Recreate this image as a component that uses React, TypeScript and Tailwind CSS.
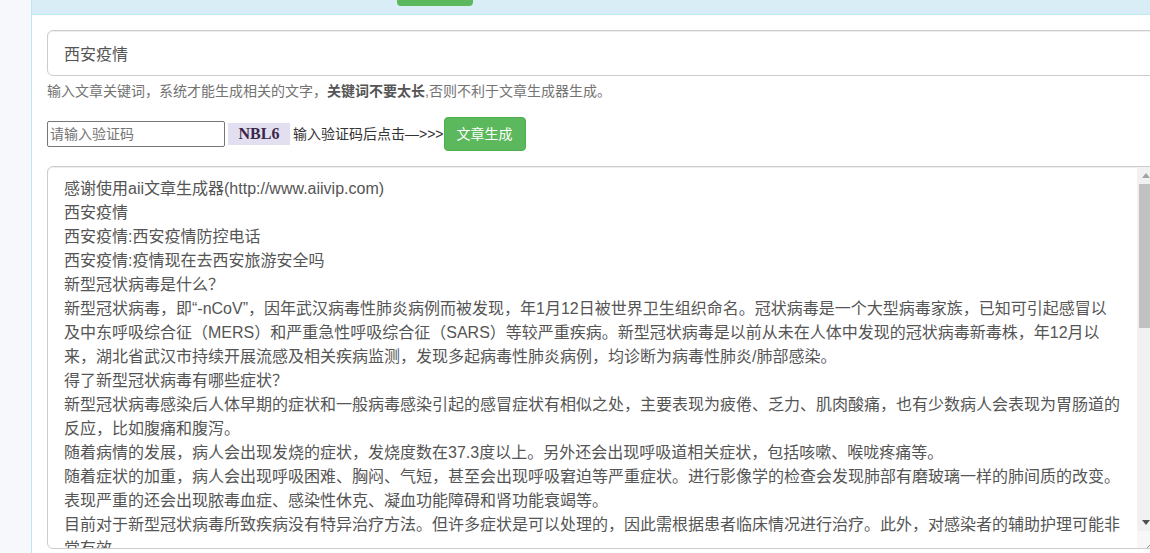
import React from "react";

const lines = [
  "感谢使用aii文章生成器(http://www.aiivip.com)",
  "西安疫情",
  "西安疫情:西安疫情防控电话",
  "西安疫情:疫情现在去西安旅游安全吗",
  "新型冠状病毒是什么？",
  "新型冠状病毒，即“-nCoV”，因年武汉病毒性肺炎病例而被发现，年1月12日被世界卫生组织命名。冠状病毒是一个大型病毒家族，已知可引起感冒以",
  "及中东呼吸综合征（MERS）和严重急性呼吸综合征（SARS）等较严重疾病。新型冠状病毒是以前从未在人体中发现的冠状病毒新毒株，年12月以",
  "来，湖北省武汉市持续开展流感及相关疾病监测，发现多起病毒性肺炎病例，均诊断为病毒性肺炎/肺部感染。",
  "得了新型冠状病毒有哪些症状？",
  "新型冠状病毒感染后人体早期的症状和一般病毒感染引起的感冒症状有相似之处，主要表现为疲倦、乏力、肌肉酸痛，也有少数病人会表现为胃肠道的",
  "反应，比如腹痛和腹泻。",
  "随着病情的发展，病人会出现发烧的症状，发烧度数在37.3度以上。另外还会出现呼吸道相关症状，包括咳嗽、喉咙疼痛等。",
  "随着症状的加重，病人会出现呼吸困难、胸闷、气短，甚至会出现呼吸窘迫等严重症状。进行影像学的检查会发现肺部有磨玻璃一样的肺间质的改变。",
  "表现严重的还会出现脓毒血症、感染性休克、凝血功能障碍和肾功能衰竭等。",
  "目前对于新型冠状病毒所致疾病没有特异治疗方法。但许多症状是可以处理的，因此需根据患者临床情况进行治疗。此外，对感染者的辅助护理可能非",
  "常有效。",
];

export default function App() {
  return (
    <div className="w-[1150px] h-[553px] overflow-hidden bg-[#f6f8fb] flex font-['Liberation_Sans','Noto_Sans_CJK_SC',sans-serif]">
      <div className="w-[31px] shrink-0" />
      <div className="w-[1139px] shrink-0 border-l border-[#bce8f1] bg-white flex flex-col">
        <div className="h-[15px] bg-[#d9edf7] border-b border-[#bce8f1] pl-[365px]">
          <div className="w-[76px] h-[6px] bg-[#5cb85c] rounded-b-[4px]" />
        </div>
        <div className="px-[15px] pt-[15px] flex flex-col">
          <input
            defaultValue="西安疫情"
            className="h-[46px] w-full border border-[#ccc] rounded-[6px] px-[16px] text-[16px] text-[#555] shadow-[inset_0_1px_1px_rgba(0,0,0,0.075)] outline-none"
          />
          <div className="mt-[5px] text-[14px] leading-[20px] text-[#737373] whitespace-nowrap">
            输入文章关键词，系统才能生成相关的文字，<b className="text-[#555]">关键词不要太长</b>,否则不利于文章生成器生成。
          </div>
          <div className="mt-[16px] h-[34px] flex items-center">
            <input
              placeholder="请输入验证码"
              className="w-[178px] h-[26px] border border-[#767676] rounded-[2px] px-[2px] text-[14px] text-[#333] placeholder:text-[#757575] outline-none"
            />
            <div className="ml-[3px] w-[62px] h-[22px] bg-[#e2e0f0] flex items-center justify-center font-['Liberation_Serif',serif] font-bold text-[16px] text-[#3b2648]">
              NBL6
            </div>
            <span className="ml-[3px] text-[14px] text-[#333] whitespace-nowrap">输入验证码后点击—&gt;&gt;&gt;</span>
            <button className="h-[34px] px-[12px] border border-[#4cae4c] bg-[#5cb85c] rounded-[4px] text-white text-[14px] leading-[20px]">
              文章生成
            </button>
          </div>
          <div className="mt-[15px] relative h-[383px] border border-[#ccc] rounded-[6px] overflow-hidden shadow-[inset_0_1px_1px_rgba(0,0,0,0.075)]">
            <div className="pl-[16px] pt-[10px] text-[16px] leading-[24px] text-[#555]">
              {lines.map((l, i) => (
                <div key={i} className="whitespace-nowrap">
                  {l}
                </div>
              ))}
            </div>
            <div className="absolute right-0 top-0 bottom-0 w-[17px] bg-[#f1f1f1]">
              <div className="h-[17px] flex items-center justify-center">
                <svg width="8" height="5" viewBox="0 0 8 5">
                  <polygon points="4,0 8,5 0,5" fill="#a3a3a3" />
                </svg>
              </div>
              <div className="absolute left-[2px] right-[2px] top-[17px] h-[144px] bg-[#c1c1c1]" />
              <div className="absolute left-0 right-0 bottom-[17px] h-[17px] flex items-center justify-center">
                <svg width="8" height="5" viewBox="0 0 8 5">
                  <polygon points="0,0 8,0 4,5" fill="#505050" />
                </svg>
              </div>
              <div className="absolute left-0 right-0 bottom-0 h-[17px] bg-[#f7f7f7] flex items-end justify-end">
                <svg width="10" height="10" viewBox="0 0 10 10">
                  <line x1="3" y1="10" x2="10" y2="3" stroke="#8a8a8a" strokeWidth="1" />
                  <line x1="6" y1="10" x2="10" y2="6" stroke="#8a8a8a" strokeWidth="1" />
                </svg>
              </div>
            </div>
          </div>
        </div>
      </div>
    </div>
  );
}
